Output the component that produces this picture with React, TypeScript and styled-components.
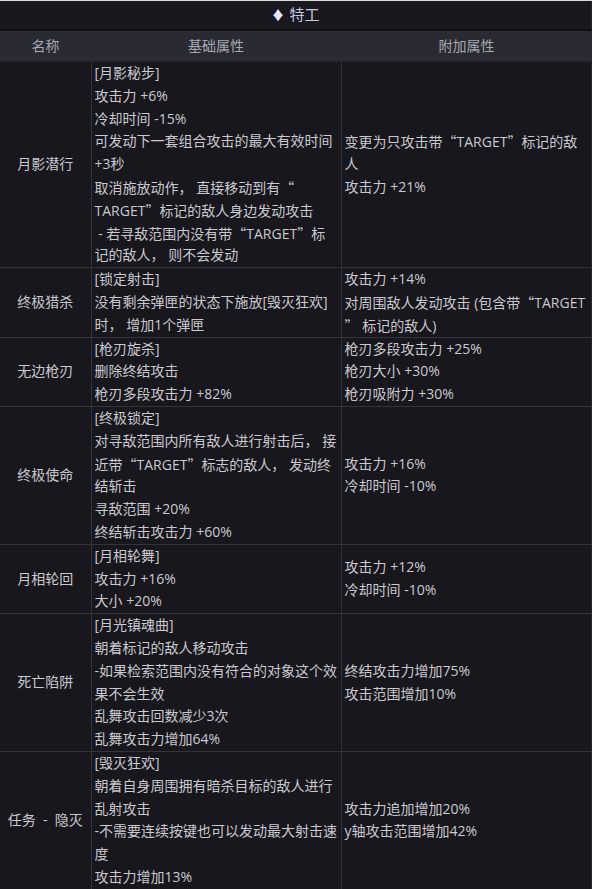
import styled, { createGlobalStyle } from 'styled-components';

const GlobalStyle = createGlobalStyle`
  html, body {
    margin: 0;
    padding: 0;
    background: #18171d;
  }
  body {
    font-family: "Open Sans", "Noto Sans CJK SC", sans-serif;
  }
`;

const Page = styled.div`
  width: 592px;
  border-top: 1px solid #dcdce0;
`;

const Table = styled.table`
  width: 592px;
  border-collapse: collapse;
  table-layout: fixed;
  background: #18171d;
  font-size: 14px;
  color: #c9c9cf;
`;

const TitleCell = styled.th`
  height: 27px;
  padding: 0;
  line-height: 27px;
  font-weight: 400;
  font-size: 15px;
  color: #c6c8e4;
  background: #19181e;
  border-bottom: 2px solid #111016;
  border-right: 2px solid #26252c;
  text-align: center;
`;

const Diamond = styled.span`
  color: #e6e8ff;
  font-size: 13px;
  margin-right: 5px;
`;

const HeadCell = styled.th`
  height: 30px;
  padding: 0;
  line-height: 30px;
  font-weight: 400;
  color: #a8a8b0;
  background: #2a2a33;
  border-bottom: 1px solid #24232a;
  text-align: center;
`;

const NameCell = styled.td`
  padding: 0 2px;
  text-align: center;
  vertical-align: middle;
  border: 1px solid #34333b;
  border-left: none;
  line-height: 22.8px;
  white-space: pre;
`;

const TextCell = styled.td<{ $middle?: boolean }>`
  padding: 0 3px;
  vertical-align: ${(p) => (p.$middle ? 'middle' : 'top')};
  border: 1px solid #34333b;
  line-height: 22.8px;
  &:last-child {
    border-right: 2px solid #26252c;
  }
`;

const Line = styled.div`
  white-space: pre;
  height: 22.8px;
`;

// full-width curly quotes, as the CJK font draws them
const Quote = styled.span`
  font-family: "Noto Sans CJK SC", sans-serif;
`;

type Row = { name: string; base: string[]; extra: string[] };

const rows: Row[] = [
  {
    name: '月影潜行',
    base: [
      '[月影秘步]',
      '攻击力 +6%',
      '冷却时间 -15%',
      '可发动下一套组合攻击的最大有效时间',
      '+3秒',
      '取消施放动作， 直接移动到有“',
      'TARGET”标记的敌人身边发动攻击',
      ' - 若寻敌范围内没有带“TARGET”标',
      '记的敌人， 则不会发动',
    ],
    extra: ['变更为只攻击带“TARGET”标记的敌', '人', '攻击力 +21%'],
  },
  {
    name: '终极猎杀',
    base: ['[锁定射击]', '没有剩余弹匣的状态下施放[毁灭狂欢]', '时， 增加1个弹匣'],
    extra: ['攻击力 +14%', '对周围敌人发动攻击 (包含带“TARGET', '” 标记的敌人)'],
  },
  {
    name: '无边枪刃',
    base: ['[枪刃旋杀]', '删除终结攻击', '枪刃多段攻击力 +82%'],
    extra: ['枪刃多段攻击力 +25%', '枪刃大小 +30%', '枪刃吸附力 +30%'],
  },
  {
    name: '终极使命',
    base: [
      '[终极锁定]',
      '对寻敌范围内所有敌人进行射击后， 接',
      '近带“TARGET”标志的敌人， 发动终',
      '结斩击',
      '寻敌范围 +20%',
      '终结斩击攻击力 +60%',
    ],
    extra: ['攻击力 +16%', '冷却时间 -10%'],
  },
  {
    name: '月相轮回',
    base: ['[月相轮舞]', '攻击力 +16%', '大小 +20%'],
    extra: ['攻击力 +12%', '冷却时间 -10%'],
  },
  {
    name: '死亡陷阱',
    base: [
      '[月光镇魂曲]',
      '朝着标记的敌人移动攻击',
      '-如果检索范围内没有符合的对象这个效',
      '果不会生效',
      '乱舞攻击回数减少3次',
      '乱舞攻击力增加64%',
    ],
    extra: ['终结攻击力增加75%', '攻击范围增加10%'],
  },
  {
    name: '任务  -  隐灭',
    base: [
      '[毁灭狂欢]',
      '朝着自身周围拥有暗杀目标的敌人进行',
      '乱射攻击',
      '-不需要连续按键也可以发动最大射击速',
      '度',
      '攻击力增加13%',
    ],
    extra: ['攻击力追加增加20%', 'y轴攻击范围增加42%'],
  },
];

function renderLine(text: string) {
  return text.split(/([“”])/).map((part, i) =>
    part === '“' || part === '”' ? <Quote key={i}>{part}</Quote> : part
  );
}

export default function App() {
  return (
    <Page>
      <GlobalStyle />
      <Table>
        <colgroup>
          <col style={{ width: 91 }} />
          <col style={{ width: 250 }} />
          <col style={{ width: 251 }} />
        </colgroup>
        <thead>
          <tr>
            <TitleCell colSpan={3}>
              <Diamond>♦</Diamond>特工
            </TitleCell>
          </tr>
          <tr>
            <HeadCell>名称</HeadCell>
            <HeadCell>基础属性</HeadCell>
            <HeadCell>附加属性</HeadCell>
          </tr>
        </thead>
        <tbody>
          {rows.map((r) => (
            <tr key={r.name}>
              <NameCell>{r.name}</NameCell>
              <TextCell>
                {r.base.map((l, i) => (
                  <Line key={i}>{renderLine(l)}</Line>
                ))}
              </TextCell>
              <TextCell $middle>
                {r.extra.map((l, i) => (
                  <Line key={i}>{renderLine(l)}</Line>
                ))}
              </TextCell>
            </tr>
          ))}
        </tbody>
      </Table>
    </Page>
  );
}
